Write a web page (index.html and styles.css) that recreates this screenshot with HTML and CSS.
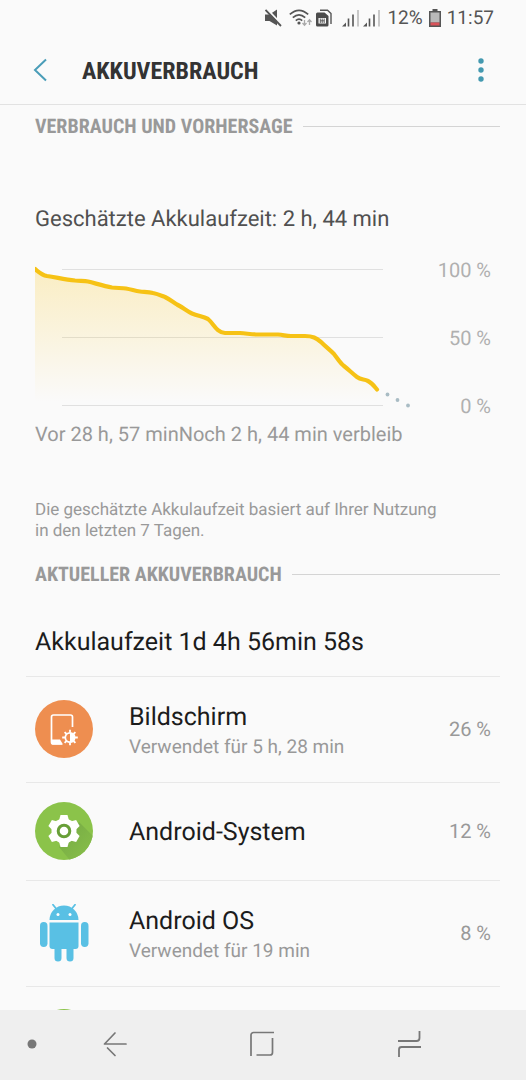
FILE: index.html
```html
<!DOCTYPE html>
<html lang="de">
<head>
<meta charset="utf-8">
<meta name="viewport" content="width=device-width, initial-scale=1">
<title>Akkuverbrauch</title>
<link rel="stylesheet" href="styles.css">
</head>
<body>
<div class="status">
  <svg class="status-mute" width="18" height="18" viewBox="0 0 18 18" aria-hidden="true">
    <path d="M0 5.500h4.500L12 .5v16L4.500 12H0z" fill="#555"/>
    <path d="M1.500 -.5l16 17" stroke="#fafafa" stroke-width="2"/>
    <path d="M.5 1l15.500 16" stroke="#555" stroke-width="1.800"/>
  </svg>
  <svg class="status-wifi" width="24" height="18" viewBox="0 0 24 18" aria-hidden="true">
    <g fill="none" stroke="#555" stroke-width="1.700">
      <path d="M.8 5.400Q10 -2.800 19.200 5.400"/>
      <path d="M3.800 8.600Q10 3 16.200 8.600"/>
      <path d="M6.800 11.600Q10 8.600 13.200 11.600"/>
    </g>
    <circle cx="10" cy="14" r="1.600" fill="#555"/>
    <path d="M15.500 11v5M13.500 14l2 2.200 2-2.200M20.500 16v-5M18.500 13l2-2.200 2 2.200" fill="none" stroke="#aaa" stroke-width="1.300"/>
  </svg>
  <svg class="status-sim" width="16" height="18" viewBox="0 0 16 18" aria-hidden="true">
    <path d="M4 1.200h7.500L15 4.500V15" fill="none" stroke="#555" stroke-width="1.400"/>
    <path d="M1.500 3.500h7L12.500 7v9a1.500 1.500 0 0 1-1.500 1.500H1.500A1.500 1.500 0 0 1 0 16V5a1.500 1.500 0 0 1 1.500-1.500z" fill="#4c4c4c"/>
    <path d="M2.500 9h7.500v5.500H2.500z" fill="#fafafa"/>
    <path d="M4.300 9.500v4.500M6.200 9.500v4.500M8.200 9.500v4.500M4.300 11.800h4" stroke="#555" stroke-width=".9"/>
  </svg>
  <svg class="status-signal status-signal-first" width="18" height="18" viewBox="0 0 18 18" aria-hidden="true">
    <path d="M0 17.500l4-4v4z" fill="#555"/>
    <path d="M6.500 17.500v-8M11 17.500v-12" stroke="#555" stroke-width="1.600"/>
    <path d="M16 17.500V1" stroke="#c2c2c2" stroke-width="1.800"/>
  </svg>
  <svg class="status-signal" width="18" height="18" viewBox="0 0 18 18" aria-hidden="true">
    <path d="M0 17.500l4-4v4z" fill="#555"/>
    <path d="M6.500 17.500v-8M11 17.500v-12" stroke="#555" stroke-width="1.600"/>
    <path d="M16 17.500V1" stroke="#c2c2c2" stroke-width="1.800"/>
  </svg>
  <span class="status-text">12%</span>
  <svg class="status-battery" width="12" height="18" viewBox="0 0 12 18" aria-hidden="true">
    <path d="M3.500 0h5v2H12v16H0V2h3.500z" fill="#555"/>
    <path d="M1.500 3.500h9v10h-9z" fill="#b9b9b9"/>
    <path d="M1.500 13.500h9v3h-9z" fill="#d9535a"/>
  </svg>
  <span class="status-text">11:57</span>
</div>

<header class="bar">
  <button class="bar-button" type="button" aria-label="Zurück">
    <svg width="14" height="24" viewBox="0 0 14 24"><path d="M13 1.500L2 12l11 10.500" fill="none" stroke="#4a9db8" stroke-width="2"/></svg>
  </button>
  <h1 class="bar-title">AKKUVERBRAUCH</h1>
  <button class="bar-button" type="button" aria-label="Weitere Optionen">
    <svg width="6" height="24" viewBox="0 0 6 24" fill="#4499b0"><circle cx="3" cy="3" r="2.700"/><circle cx="3" cy="12" r="2.700"/><circle cx="3" cy="21" r="2.700"/></svg>
  </button>
</header>

<main class="content">
  <h2 class="section">VERBRAUCH UND VORHERSAGE</h2>
  <section class="forecast">
    <p class="estimate">Geschätzte Akkulaufzeit: 2 h, 44 min</p>
    <div class="chart">
      <svg class="plot" viewBox="0 0 375 156" role="img" aria-label="Akkustand im Zeitverlauf">
        <defs>
          <linearGradient id="fade" x1="0" y1="0" x2="0" y2="1">
            <stop offset="0" stop-color="#fbc516" stop-opacity=".24"/>
            <stop offset="1" stop-color="#fbc516" stop-opacity="0"/>
          </linearGradient>
        </defs>
        <path d="M27 9.500h321M27 77.500h321M27 145.500h321" stroke="#e0e0e0" stroke-width="1.200"/>
        <path d="M0 9C5 13 7 15 12 16C22 17.500 30 19.500 40 20.500C47 21 50 21 53 21.500C61 23.500 69 26 77 27.500C82 28 87 28 91 28.500C97 29.500 100 31 105 31.500C110 32 114 32 118 33C123 34 126 35.500 130 37C135 39.500 138 42 142 44.500C148 47.500 152 51 157 53.500C163 56 168 56.500 173 59C179 64 181 72 190 73H205C212 73.500 217 74.500 223 74.500H243C249 75 251 76 256 76H270C278 76 281 78 286 82C291 87 295 90 299 94C303 99 305 103 309 106C314 110 318 114 322 117C326 120 329 119 333 121C337 123 339 127 343 130V142H0z" fill="url(#fade)"/>
        <path d="M0 9C5 13 7 15 12 16C22 17.500 30 19.500 40 20.500C47 21 50 21 53 21.500C61 23.500 69 26 77 27.500C82 28 87 28 91 28.500C97 29.500 100 31 105 31.500C110 32 114 32 118 33C123 34 126 35.500 130 37C135 39.500 138 42 142 44.500C148 47.500 152 51 157 53.500C163 56 168 56.500 173 59C179 64 181 72 190 73H205C212 73.500 217 74.500 223 74.500H243C249 75 251 76 256 76H270C278 76 281 78 286 82C291 87 295 90 299 94C303 99 305 103 309 106C314 110 318 114 322 117C326 120 329 119 333 121C337 123 339 126 342 129.500" fill="none" stroke="#f6c215" stroke-width="4.200" stroke-linecap="round"/>
        <g fill="#a9bcc4"><circle cx="352.500" cy="134.500" r="1.900"/><circle cx="362.500" cy="140" r="1.900"/><circle cx="373" cy="145.500" r="1.900"/></g>
      </svg>
      <div class="scale"><span>100 %</span><span>50 %</span><span>0 %</span></div>
      <p class="range"><span>Vor 28 h, 57 min</span><span>Noch 2 h, 44 min verbleib</span></p>
    </div>
    <p class="hint">Die geschätzte Akkulaufzeit basiert auf Ihrer Nutzung in den letzten 7 Tagen.</p>
  </section>

  <h2 class="section">AKTUELLER AKKUVERBRAUCH</h2>
  <p class="runtime">Akkulaufzeit 1d 4h 56min 58s</p>
  <ul class="apps">
    <li class="app">
      <svg class="app-icon" viewBox="0 0 58 58" aria-hidden="true">
        <circle cx="29" cy="29" r="29" fill="#ee8e50"/>
        <path d="M37.500 27V17a2 2 0 0 0-2-2H18.500a2 2 0 0 0-2 2v25a2 2 0 0 0 2 2H27" fill="none" stroke="#fff" stroke-width="1.700"/>
        <path d="M16 39.500h9l3 5H18a2 2 0 0 1-2-2z" fill="#fff"/>
        <g transform="translate(35 37.500)">
          <circle r="5.500" fill="#fff"/>
          <path d="M0-7.800V-5M0 5V7.800M-7.800 0H-5M5 0H7.800M-5.400-5.400L-3.500-3.500M3.500 3.500L5.400 5.400M-5.400 5.400L-3.500 3.500M3.500-3.500L5.400-5.400" stroke="#fff" stroke-width="1.800"/>
          <path d="M0-3.800A3.800 3.800 0 0 0 0 3.800z" fill="#ee8e50"/>
        </g>
      </svg>
      <div class="app-text"><span class="app-name">Bildschirm</span><span class="app-note">Verwendet für 5 h, 28 min</span></div>
      <span class="app-share">26 %</span>
    </li>
    <li class="app">
      <svg class="app-icon" viewBox="0 0 58 58" aria-hidden="true">
        <defs>
          <clipPath id="disc"><circle cx="29" cy="29" r="29"/></clipPath>
          <linearGradient id="shade" x1="0" y1="0" x2="1" y2="1">
            <stop offset="0" stop-color="#74a844"/>
            <stop offset="1" stop-color="#8bc34a"/>
          </linearGradient>
        </defs>
        <circle cx="29" cy="29" r="29" fill="#8bc34a"/>
        <path d="M44 20L62 38V62H38L24 45z" fill="url(#shade)" clip-path="url(#disc)"/>
        <g fill="#fff" transform="translate(29 29)">
          <circle r="12.500"/>
          <path id="tooth" d="M-5-10.500L-3.500-16h7L5-10.500V10.500L3.500 16h-7L-5 10.500z"/>
          <use href="#tooth" transform="rotate(60)"/>
          <use href="#tooth" transform="rotate(120)"/>
          <circle r="5.800" fill="#fff" stroke="#689f38" stroke-width="3"/>
        </g>
      </svg>
      <div class="app-text"><span class="app-name">Android-System</span></div>
      <span class="app-share">12 %</span>
    </li>
    <li class="app">
      <svg class="app-icon" viewBox="0 1 58 58" aria-hidden="true">
        <g fill="#59c0e4">
          <path d="M14.500 17a14.500 14.500 0 0 1 29 0z"/>
          <path d="M14.500 19.500h29V43a3 3 0 0 1-3 3h-23a3 3 0 0 1-3-3z"/>
          <rect x="5" y="19" width="7.500" height="25" rx="3.700"/>
          <rect x="46" y="19" width="7.500" height="25" rx="3.700"/>
          <rect x="19.500" y="40" width="7" height="18.500" rx="3.500"/>
          <rect x="31.500" y="40" width="7" height="18.500" rx="3.500"/>
        </g>
        <path d="M18 1.800l4 5M40 1.800l-4 5" stroke="#59c0e4" stroke-width="1.800" stroke-linecap="round"/>
        <circle cx="23" cy="11.500" r="1.500" fill="#fff"/><circle cx="35" cy="11.500" r="1.500" fill="#fff"/>
      </svg>
      <div class="app-text"><span class="app-name">Android OS</span><span class="app-note">Verwendet für 19 min</span></div>
      <span class="app-share">8 %</span>
    </li>
    <li class="app">
      <svg class="app-icon" viewBox="0 0 58 58" aria-hidden="true"><circle cx="29" cy="29" r="26" fill="#8bc34a"/></svg>
    </li>
  </ul>
</main>

<nav class="nav" aria-label="Navigation">
  <button class="nav-button nav-pin" type="button" aria-label="Leiste ausblenden">
    <svg width="10" height="10" viewBox="0 0 10 10"><circle cx="5" cy="5" r="4.500" fill="#777"/></svg>
  </button>
  <button class="nav-button" type="button" aria-label="Zurück">
    <svg width="24" height="26" viewBox="0 0 24 26"><path d="M23 13H1.500L12 2M4.500 17L12 24.500" fill="none" stroke="#777" stroke-width="1.700" stroke-linecap="round" stroke-linejoin="round"/></svg>
  </button>
  <button class="nav-button" type="button" aria-label="Startbildschirm">
    <svg width="24" height="26" viewBox="0 0 24 26"><path d="M1 25V4a2.500 2.500 0 0 1 2.500-2.500H24M22.500 7v14.500a2.500 2.500 0 0 1-2.500 2.500H6.500" fill="none" stroke="#777" stroke-width="1.700"/></svg>
  </button>
  <button class="nav-button" type="button" aria-label="Letzte Apps">
    <svg width="24" height="26" viewBox="0 0 24 26"><path d="M1 10h18.500a3 3 0 0 0 3-3V0M24 16H4.500a2.500 2.500 0 0 0-2.500 2.500V26" fill="none" stroke="#777" stroke-width="1.800"/></svg>
  </button>
</nav>
</body>
</html>
```
FILE: styles.css
```css
* {
  box-sizing: border-box;
}

body {
  display: flex;
  flex-direction: column;
  height: 100vh;
  margin: 0;
  overflow: hidden;
  background: #fafafa;
  color: #1c1c1c;
  font-family: Roboto, sans-serif;
  text-rendering: geometricPrecision;
}

h1,
h2,
p,
ul {
  margin: 0;
  padding: 0;
}

button {
  display: flex;
  align-items: center;
  justify-content: center;
  padding: 0;
  border: 0;
  background: none;
}

svg {
  display: block;
  flex: none;
}

.status {
  display: flex;
  flex: none;
  align-items: center;
  justify-content: flex-end;
  gap: 3px;
  height: 36px;
  padding-right: 32px;
  color: #555;
  font-size: 19px;
  line-height: 36px;
}

.status-wifi,
.status-battery,
.status-text {
  margin-left: 3px;
}

.status-signal-first {
  margin-left: 7px;
}

.bar {
  display: flex;
  flex: none;
  align-items: center;
  height: 69px;
  padding: 0 32px;
  border-bottom: 1px solid #e2e2e2;
}

.bar-button {
  width: 26px;
  height: 48px;
}

.bar-button:first-child {
  width: 16px;
}

.bar-title {
  flex: 1;
  padding: 2px 0 0 34px;
  color: #333;
  font: 700 24px/34px "Roboto Condensed", "Liberation Sans Narrow", Roboto, sans-serif;
}

.content {
  flex: 1;
  min-height: 0;
  padding: 8px 26px 0;
  overflow: hidden;
}

.section {
  display: flex;
  align-items: center;
  gap: 10px;
  padding-left: 9px;
  color: #999;
  font: 700 20px/26px "Roboto Condensed", "Liberation Sans Narrow", Roboto, sans-serif;
}

.section::after {
  flex: 1;
  height: 1px;
  background: #d4d4d4;
  content: "";
}

.forecast {
  padding: 67px 9px 19px;
}

.estimate {
  color: #505050;
  font-size: 22px;
  line-height: 28px;
}

.chart {
  display: grid;
  grid-template-columns: 375fr 81fr;
  row-gap: 6px;
  padding-top: 26px;
}

.plot {
  width: 100%;
}

.scale {
  display: flex;
  flex-direction: column;
  justify-content: space-between;
  color: #b0b0b0;
  font-size: 20px;
  line-height: 20px;
  text-align: right;
}

.range {
  display: flex;
  overflow: hidden;
  color: #999;
  font-size: 20px;
  line-height: 24px;
  white-space: nowrap;
}

.hint {
  padding: 54px 38px 0 0;
  color: #999;
  font-size: 17px;
  line-height: 21px;
}

.runtime {
  padding: 38px 9px 15px;
  border-bottom: 1px solid #e8e8e8;
  font-size: 25px;
  line-height: 36px;
}

.apps {
  list-style: none;
}

.app {
  display: flex;
  align-items: center;
  padding: 19px 9px 20px;
  border-bottom: 1px solid #e8e8e8;
}

.app-icon {
  width: 58px;
  height: 58px;
}

.app-text {
  display: flex;
  flex: 1;
  flex-direction: column;
  padding: 6px 0 2px 36px;
}

.app-name {
  font-size: 25px;
  line-height: 32px;
}

.app-note {
  color: #999;
  font-size: 19px;
  line-height: 26px;
}

.app-share {
  color: #999;
  font-size: 20px;
}

.nav {
  display: grid;
  flex: none;
  grid-template-columns: 2fr 7fr 7fr 7fr;
  height: 70px;
  padding: 0 44px 2px 0;
  background: #efefef;
}

.nav-button {
  width: 100%;
}

.nav-pin {
  justify-content: flex-end;
  padding-right: 5px;
}
```
